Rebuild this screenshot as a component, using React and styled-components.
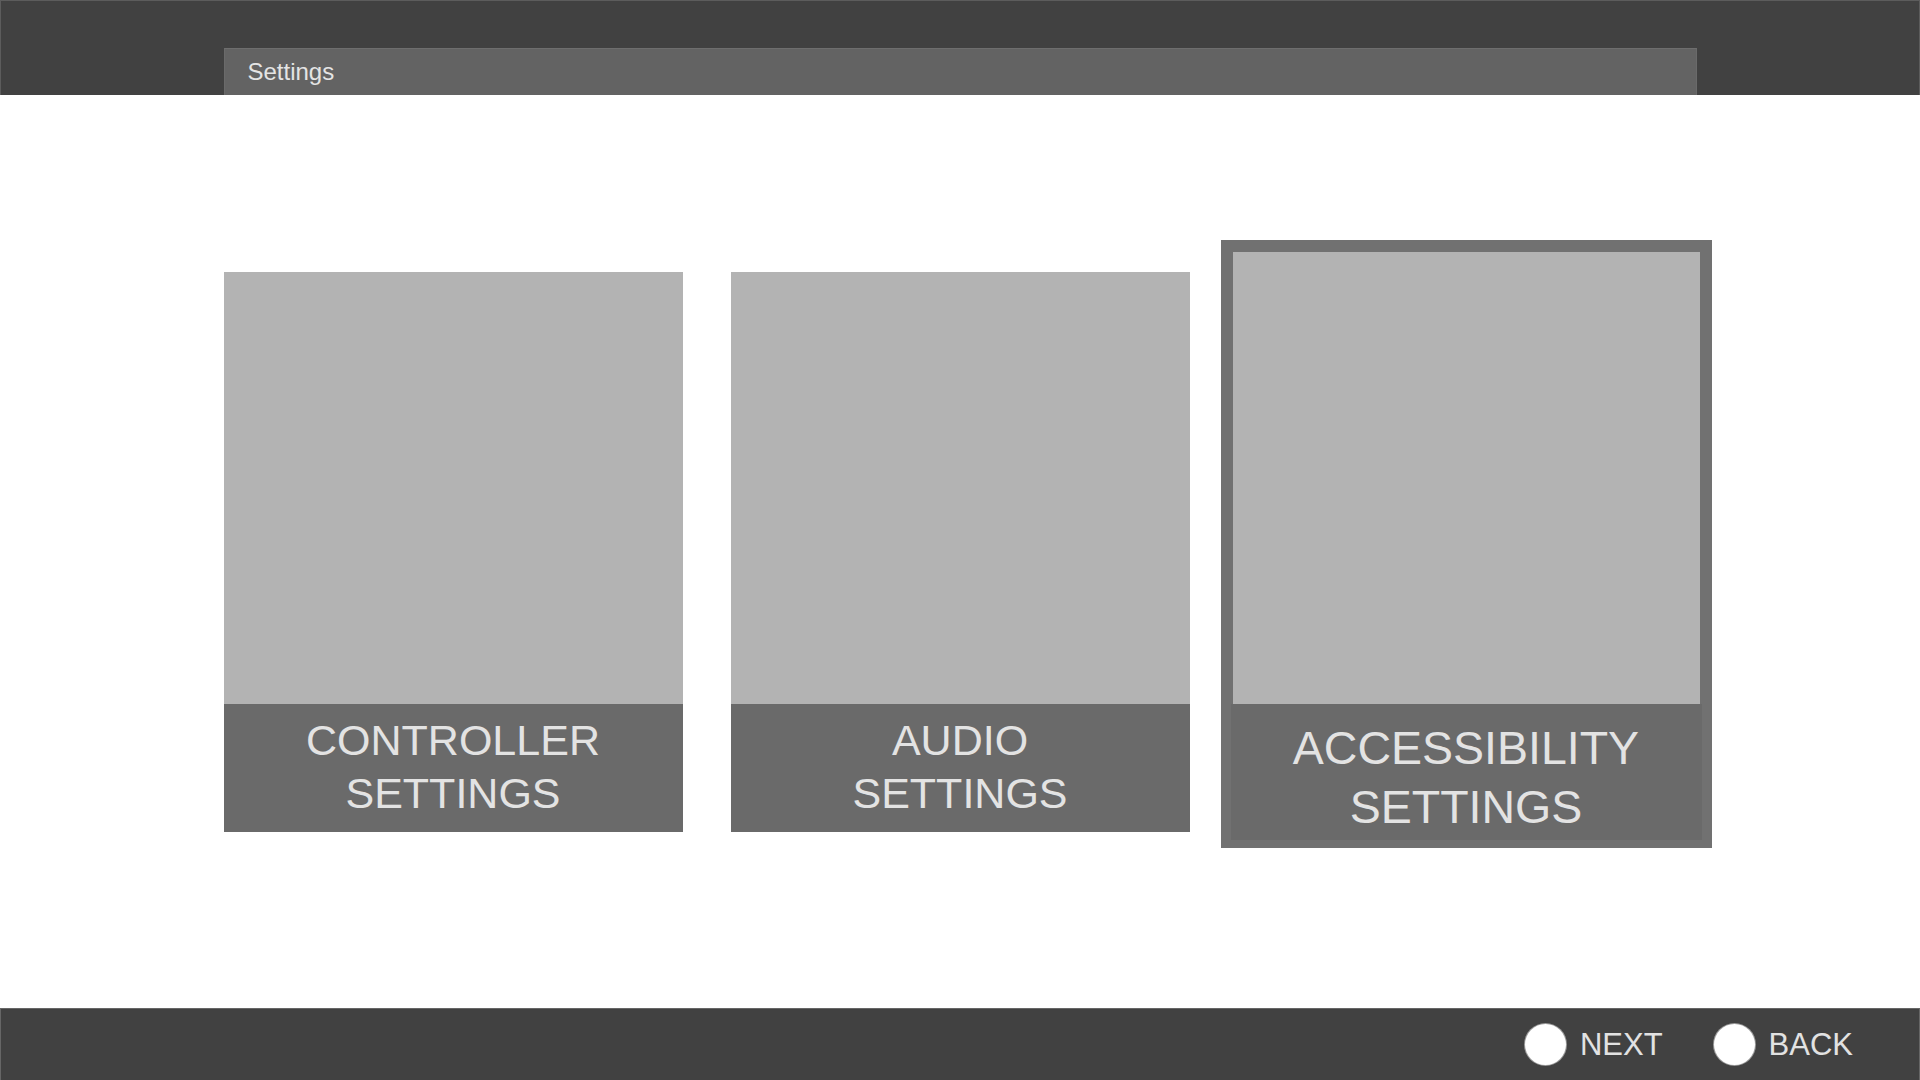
import styled, { createGlobalStyle } from "styled-components";

const GlobalStyle = createGlobalStyle`
  html, body {
    margin: 0;
    padding: 0;
    background: #ffffff;
    font-family: "Liberation Sans", Arial, sans-serif;
  }
  * { box-sizing: border-box; }
`;

const Page = styled.div`
  width: 1920px;
  height: 1080px;
  display: flex;
  flex-direction: column;
  background: #ffffff;
  overflow: hidden;
`;

const TopBar = styled.header`
  height: 95px;
  background: #414141;
  border: 1px solid #5c5c5c;
  border-bottom: none;
  display: flex;
  align-items: flex-end;
  justify-content: center;
`;

const TitleTab = styled.div`
  width: 1473px;
  height: 47px;
  background: #636363;
  border-top: 1px solid #6e6e6e;
  border-left: 1px solid #6a6a6a;
  border-right: 1px solid #6a6a6a;
  display: flex;
  align-items: center;
  padding-left: 23px;
  color: #e4e4e4;
  font-size: 24px;
`;

const Main = styled.main`
  flex: 1;
  padding-top: 177px;
  display: flex;
  justify-content: center;
  align-items: flex-start;
`;

const CardGrid = styled.div`
  display: grid;
  grid-template-columns: repeat(3, 459px);
  column-gap: 48px;
`;

const Card = styled.div`
  display: flex;
  flex-direction: column;
  height: ${(p) => (p.$selected ? "608px" : "560px")};
  margin: ${(p) => (p.$selected ? "-32px -15px -16px -17px" : "0")};
  padding: ${(p) => (p.$selected ? "12px 10px 8px 10px" : "0")};
  background: ${(p) => (p.$selected ? "#717171" : "transparent")};
`;

const Thumb = styled.div`
  height: ${(p) => (p.$selected ? "452px" : "432px")};
  margin: ${(p) => (p.$selected ? "0 2px" : "0")};
  background: #b3b3b3;
`;

const Label = styled.div`
  flex: 1;
  background: #6a6a6a;
  color: #e3e3e3;
  display: flex;
  flex-direction: column;
  align-items: center;
  justify-content: center;
  text-align: center;
  font-size: ${(p) => (p.$selected ? "46.5px" : "43px")};
  line-height: ${(p) => (p.$selected ? "59px" : "53px")};
  padding: ${(p) => (p.$selected ? "13px 0 2px" : "0 0 3px")};
`;

const BottomBar = styled.footer`
  height: 72px;
  background: #414141;
  border: 1px solid #666666;
  border-bottom: none;
  display: flex;
  justify-content: flex-end;
  align-items: center;
  padding-right: 66px;
  gap: 51px;
`;

const Prompt = styled.div`
  display: flex;
  align-items: center;
  gap: 14px;
  color: #e2e2e2;
  font-size: 31px;
`;

const ButtonDot = styled.span`
  width: 41px;
  height: 41px;
  border-radius: 50%;
  background: #ffffff;
  box-shadow: 0 0 0 1px #9a9a9a;
`;

const cards = [
  { id: 1, lines: ["CONTROLLER", "SETTINGS"] },
  { id: 2, lines: ["AUDIO", "SETTINGS"] },
  { id: 3, lines: ["ACCESSIBILITY", "SETTINGS"], selected: true },
];

export default function App() {
  return (
    <>
      <GlobalStyle />
      <Page>
        <TopBar>
          <TitleTab>Settings</TitleTab>
        </TopBar>
        <Main>
          <CardGrid>
            {cards.map((c) => (
              <Card key={c.id} $selected={c.selected}>
                <Thumb $selected={c.selected} />
                <Label $selected={c.selected}>
                  {c.lines.map((l) => (
                    <span key={l}>{l}</span>
                  ))}
                </Label>
              </Card>
            ))}
          </CardGrid>
        </Main>
        <BottomBar>
          <Prompt>
            <ButtonDot />
            NEXT
          </Prompt>
          <Prompt>
            <ButtonDot />
            BACK
          </Prompt>
        </BottomBar>
      </Page>
    </>
  );
}
